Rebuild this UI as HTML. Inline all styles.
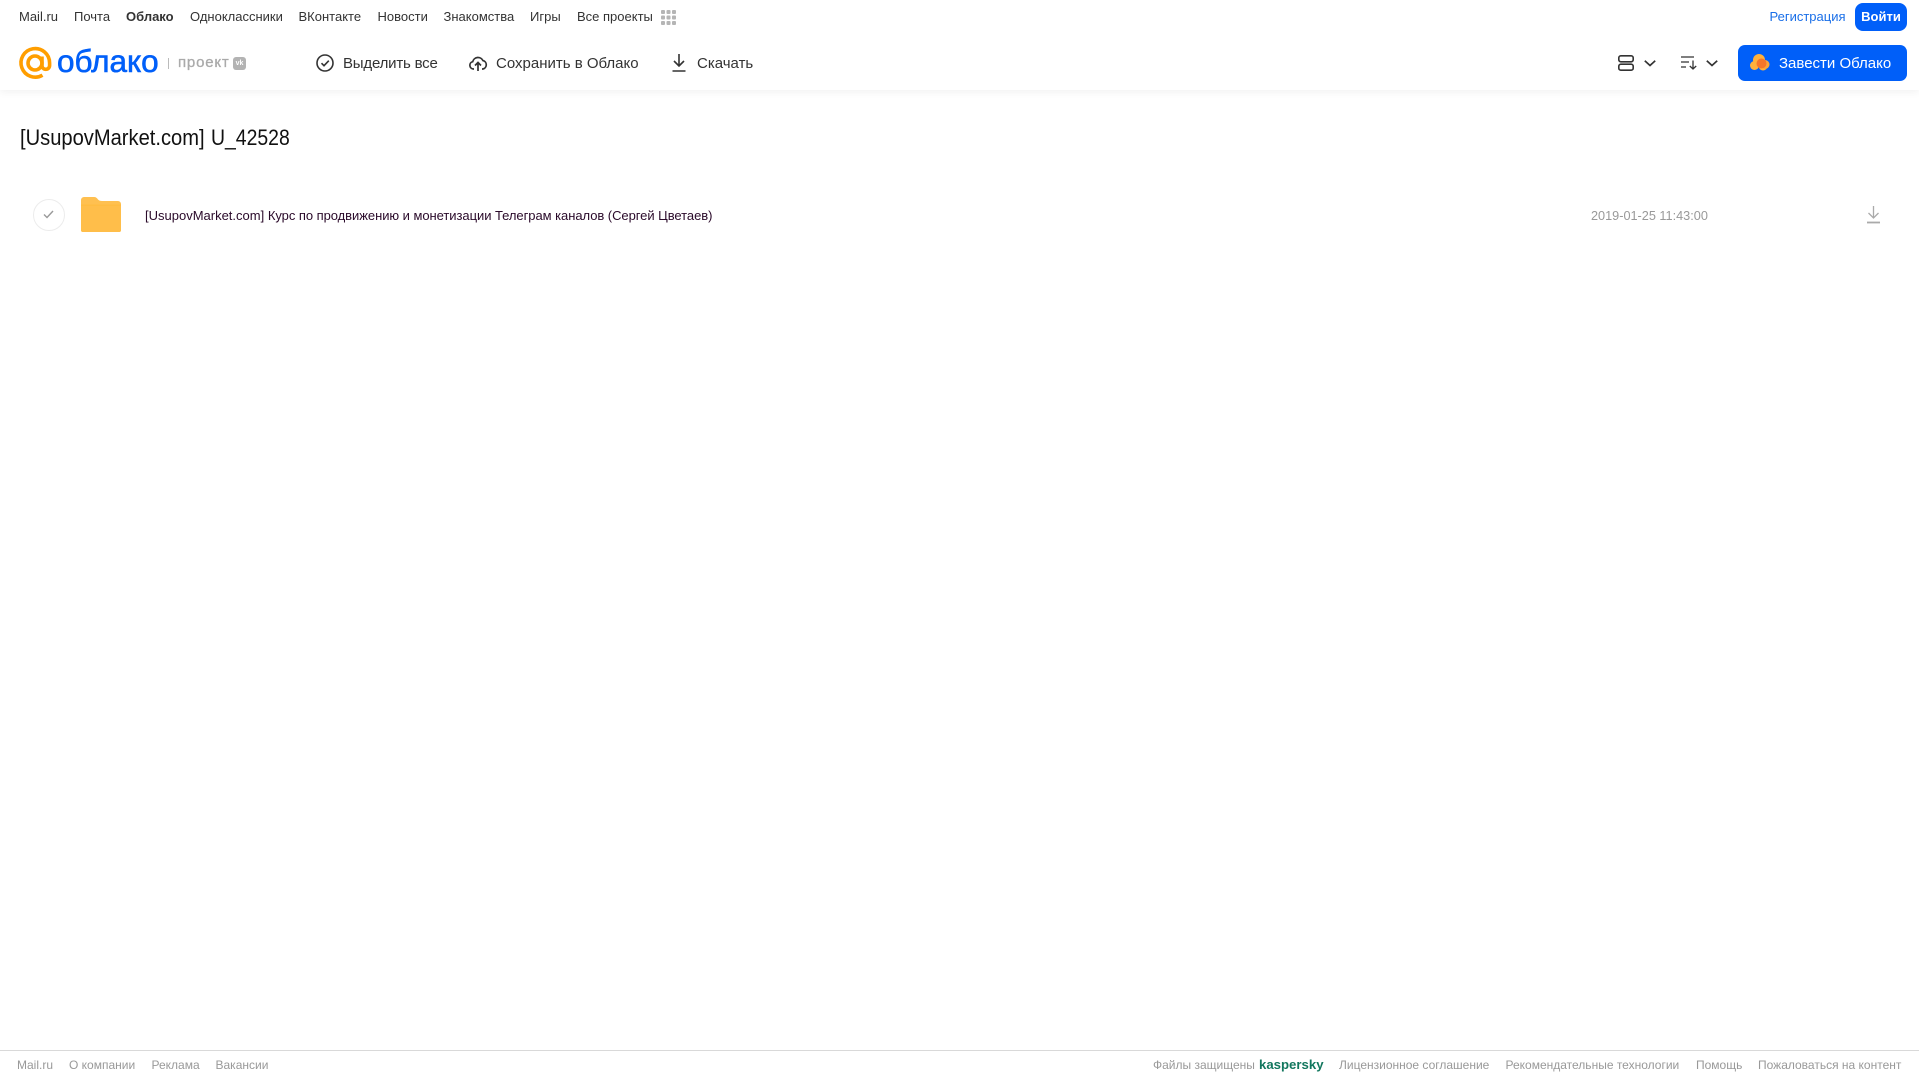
<!DOCTYPE html>
<html lang="ru"><head><meta charset="utf-8"><title>Облако</title>
<style>
html,body{margin:0;padding:0;width:1919px;height:1079px;overflow:hidden;background:#fff;font-family:"Liberation Sans",sans-serif}
.t{position:absolute;white-space:nowrap;line-height:20px;height:20px}
.n{top:6.5px;font-size:13px;color:#333}
.b{top:54px;font-size:15px;color:#333}
.f{top:1055px;font-size:12px;color:#999}
svg{position:absolute;overflow:visible}
</style></head><body>
<div style="position:absolute;left:0;top:0;width:1919px;height:90px;background:#fff;box-shadow:0 2px 8px rgba(0,0,0,.06)"></div>

<div class="t n" style="left:19px">Mail.ru</div>
<div class="t n" style="left:74px">Почта</div>
<div class="t n" style="left:126px;font-weight:bold">Облако</div>
<div class="t n" style="left:190px">Одноклассники</div>
<div class="t n" style="left:298.5px">ВКонтакте</div>
<div class="t n" style="left:377.5px">Новости</div>
<div class="t n" style="left:443.5px">Знакомства</div>
<div class="t n" style="left:530px">Игры</div>
<div class="t n" style="left:577px">Все проекты</div>
<svg style="left:661px;top:10px" width="15" height="15" fill="#b5b5b5"><rect x="0" y="0" width="4" height="4" rx="1"/><rect x="5.5" y="0" width="4" height="4" rx="1"/><rect x="11" y="0" width="4" height="4" rx="1"/><rect x="0" y="5.5" width="4" height="4" rx="1"/><rect x="5.5" y="5.5" width="4" height="4" rx="1"/><rect x="11" y="5.5" width="4" height="4" rx="1"/><rect x="0" y="11" width="4" height="4" rx="1"/><rect x="5.5" y="11" width="4" height="4" rx="1"/><rect x="11" y="11" width="4" height="4" rx="1"/></svg>

<svg style="left:19px;top:47px" width="33" height="33" fill="none" stroke="#ff9e00" stroke-width="3.6"><circle cx="16" cy="16" r="7"/><path d="M23 9.5V18.5a3.8 3.8 0 0 0 7.6 0V16A14.3 14.3 0 1 0 23.500 28.200"/></svg>
<div class="t" style="left:57px;top:45px;height:32px;line-height:32px;font-size:31.500px;color:#005ff9;-webkit-text-stroke:.6px #005ff9">облако</div>
<div style="position:absolute;left:168px;top:58px;width:1px;height:11px;background:#bbb"></div>
<div class="t" style="left:178px;top:52.5px;font-size:15px;color:#aaa;letter-spacing:.8px;-webkit-text-stroke:.3px #aaa">проект</div>
<div class="t" style="left:233px;top:56.5px;width:13px;height:13px;border-radius:3px;background:#b3b3b3;color:#fff;font-size:7px;line-height:13px;font-weight:bold;text-align:center">vk</div>

<svg style="left:316px;top:54px" width="18" height="18" fill="none" stroke="#333" stroke-width="1.6"><circle cx="9" cy="9" r="8"/><path d="M5.5 9.2l2.5 2.5 4.8-5"/></svg>
<div class="t b" style="left:343px;letter-spacing:-.2px">Выделить все</div>
<svg style="left:469px;top:54px" width="18" height="18" fill="none" stroke="#333" stroke-width="1.7"><path d="M5 15H4.5A3.7 3.700 0 0 1 3.700 7.700 5.500 5.500 0 0 1 14 6.600 4.300 4.300 0 0 1 13.800 15H13M9 17V9M6 11.500L9 8.500l3 3"/></svg>
<div class="t b" style="left:496px">Сохранить в Облако</div>
<svg style="left:672px;top:54px" width="15" height="18" fill="none" stroke="#333" stroke-width="1.6"><path d="M7 0V12M2 7l5 5 5-5M.5 17h13"/></svg>
<div class="t b" style="left:697px">Скачать</div>

<svg style="left:1618px;top:55px" width="16" height="16" fill="none" stroke="#333" stroke-width="1.6"><rect x=".8" y=".8" width="14.400" height="6" rx="2"/><rect x=".8" y="9.200" width="14.400" height="6" rx="2"/></svg>
<svg style="left:1644px;top:60px" width="12" height="7" fill="none" stroke="#333" stroke-width="1.7"><path d="M.8 .8L6 5.500 11.200 .8"/></svg>
<svg style="left:1681px;top:56px" width="17" height="14" fill="none" stroke="#333" stroke-width="1.300"><path d="M0 1h13M0 6h8M0 11h5M12 4.500V13M8.800 10L12 13l3.200-3"/></svg>
<svg style="left:1706px;top:60px" width="12" height="7" fill="none" stroke="#333" stroke-width="1.7"><path d="M.8 .8L6 5.500 11.200 .8"/></svg>

<div class="t" style="left:1769.5px;top:6.5px;font-size:13px;color:#1a6fe8">Регистрация</div>
<div class="t" style="left:1855px;top:3px;width:52px;height:28px;line-height:28px;border-radius:8px;background:#005ff9;color:#fff;font-size:13px;font-weight:bold;text-align:center">Войти</div>
<div style="position:absolute;left:1738px;top:45px;width:169px;height:36px;border-radius:7px;background:#005ff9"></div>
<svg style="left:1750px;top:54px" width="20" height="17"><circle cx="4.500" cy="11.500" r="4.500" fill="#ffb13b"/><circle cx="9" cy="6" r="6" fill="#ffb13b"/><circle cx="13" cy="12" r="4.500" fill="#ffb13b"/><circle cx="15" cy="10.500" r="4.500" fill="#fba43a"/><circle cx="11.500" cy="9.500" r="5" fill="#f5762b"/></svg>
<div class="t" style="left:1779px;top:54px;font-size:15px;color:#fff">Завести Облако</div>

<div class="t" style="left:20px;top:125px;height:26px;line-height:26px;font-size:22px;color:#111;transform:scaleX(.915);transform-origin:0 50%">[UsupovMarket.com]</div>
<div class="t" style="left:210.5px;top:125px;height:26px;line-height:26px;font-size:22px;color:#111;transform:scaleX(.882);transform-origin:0 50%">U_42528</div>

<div style="position:absolute;left:33px;top:199px;width:30px;height:30px;border:1px solid #ececec;border-radius:50%"></div>
<svg style="left:43px;top:210px" width="11" height="9" fill="none" stroke="#999" stroke-width="1.4"><path d="M1 4.500L4 7.500 10 1"/></svg>
<svg style="left:81px;top:197px" width="40" height="36"><path d="M3 0H13C15 0 16 1 17 2.500 18 3.500 19 4 21 4H37a3 3 0 0 1 3 3V33a2 2 0 0 1-2 2H2a2 2 0 0 1-2-2V3A3 3 0 0 1 3 0z" fill="#ffc050"/><path d="M0 9H40V33a2 2 0 0 1-2 2H2a2 2 0 0 1-2-2z" fill="#ffbe4a"/><path d="M0 7.500H40V9H0z" fill="#ffb733" opacity=".5"/></svg>
<div class="t" style="left:145px;top:206px;font-size:13px;color:#2a0a2a">[UsupovMarket.com] <span style="letter-spacing:-.05px">Курс по продвижению и монетизации Телеграм каналов (Сергей Цветаев)</span></div>
<div class="t" style="left:1591px;top:206px;font-size:12.700px;color:#999">2019-01-25 11:43:00</div>
<svg style="left:1867px;top:206px" width="13" height="18" fill="none" stroke="#aaa" stroke-width="1.300"><path d="M6.500 0V12M1.500 7l5 5 5-5"/><path d="M0 16.500h13" stroke-width="1.800"/></svg>

<div style="position:absolute;left:0;top:1050px;width:1919px;height:1px;background:#d9d9d9"></div>
<div class="t f" style="left:17px">Mail.ru</div>
<div class="t f" style="left:69px">О компании</div>
<div class="t f" style="left:151.5px">Реклама</div>
<div class="t f" style="left:215.5px">Вакансии</div>
<div class="t f" style="left:1153px">Файлы защищены</div>
<div class="t f" style="left:1259px;font-size:13.200px;font-weight:bold;color:#12775e">kaspersky</div>
<div class="t f" style="left:1339px">Лицензионное соглашение</div>
<div class="t f" style="left:1505.5px">Рекомендательные технологии</div>
<div class="t f" style="left:1696px">Помощь</div>
<div class="t f" style="left:1758px">Пожаловаться на контент</div>
</body></html>
